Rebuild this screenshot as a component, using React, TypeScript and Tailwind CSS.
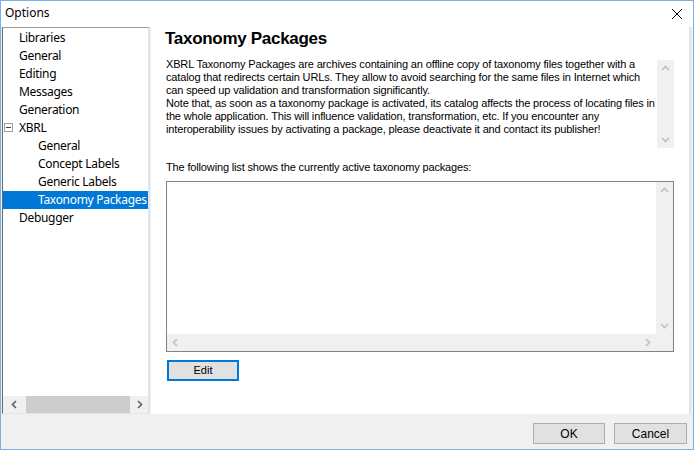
import React from "react";

const ui = { fontFamily: '"Noto Sans", "Open Sans", sans-serif' };
const ms = { fontFamily: '"Liberation Sans", Arial, sans-serif' };

function Chevron({ dir, color }: { dir: "up" | "down" | "left" | "right"; color: string }) {
  const paths: Record<string, string> = {
    up: "M1 6 L4.5 2.5 L8 6",
    down: "M1 3 L4.5 6.5 L8 3",
    left: "M6 1 L2.5 4.5 L6 8",
    right: "M3 1 L6.5 4.5 L3 8",
  };
  return (
    <svg width="9" height="9" viewBox="0 0 9 9">
      <path d={paths[dir]} fill="none" stroke={color} strokeWidth="1.6" />
    </svg>
  );
}

const tree: { label: string; level: number; selected?: boolean; toggle?: boolean }[] = [
  { label: "Libraries", level: 1 },
  { label: "General", level: 1 },
  { label: "Editing", level: 1 },
  { label: "Messages", level: 1 },
  { label: "Generation", level: 1 },
  { label: "XBRL", level: 1, toggle: true },
  { label: "General", level: 2 },
  { label: "Concept Labels", level: 2 },
  { label: "Generic Labels", level: 2 },
  { label: "Taxonomy Packages", level: 2, selected: true },
  { label: "Debugger", level: 1 },
];

export default function App() {
  return (
    <div className="w-[694px] h-[450px] border border-[#79b0e6] flex flex-col bg-[#f0f0f0] overflow-hidden">
      {/* title bar */}
      <div className="h-[26px] bg-white flex items-center justify-between shrink-0">
        <span className="pl-[4px] pb-[2px] text-[12px] text-black" style={ui}>Options</span>
        <svg width="12" height="12" viewBox="0 0 12 12" className="mr-[10px]">
          <path d="M1 1 L11 11 M11 1 L1 11" stroke="#000" strokeWidth="1" />
        </svg>
      </div>
      {/* body */}
      <div className="flex h-[387px] shrink-0">
        {/* tree */}
        <div className="ml-[1px] w-[148px] h-[387px] border-t border-l border-t-[#a0a0a0] border-l-[#696969] border-r-2 border-b border-r-[#e3e3e3] border-b-[#e3e3e3] bg-white flex flex-col">
          <div className="flex-1 flex flex-col pt-[1px]" style={ui}>
            {tree.map((t, i) => (
              <div
                key={i}
                className={
                  "h-[18px] flex items-center relative text-[12px] tracking-[-0.3px] whitespace-nowrap " +
                  (t.selected ? "bg-[#0078d7] text-white" : "text-black")
                }
              >
                {t.toggle && (
                  <div className="absolute left-[1px] top-[4px] w-[9px] h-[9px] border border-[#a0a0a0] bg-white flex items-center justify-center">
                    <div className="w-[5px] h-[1px] bg-[#404040]" />
                  </div>
                )}
                <span className={t.level === 1 ? "pl-[16px]" : "pl-[35px]"}>{t.label}</span>
              </div>
            ))}
          </div>
          <div className="h-[17px] bg-[#f0f0f0] flex items-center">
            <div className="w-[23px] flex justify-center"><Chevron dir="left" color="#606060" /></div>
            <div className="w-[104px] h-[17px] bg-[#cdcdcd]" />
            <div className="flex-1 flex justify-center"><Chevron dir="right" color="#606060" /></div>
          </div>
        </div>
        {/* content */}
        <div className="ml-[1px] flex-1 bg-white border-r-2 border-r-[#e3e3e3] mr-[2px] pl-[14px] pr-[15px] flex flex-col">
          <div className="h-[22px] leading-[22px] mt-[1px] text-[17px] font-bold text-black tracking-[-0.3px]" style={ms}>
            Taxonomy Packages
          </div>
          <div className="mt-[8px] h-[90px] flex">
            <div className="flex-1 pl-[1px] text-[11px] leading-[13px] text-black tracking-[-0.15px]" style={ms}>
              XBRL Taxonomy Packages are archives containing an offline copy of taxonomy files together with a catalog that redirects certain URLs. They allow to avoid searching for the same files in Internet which can speed up validation and transformation significantly.
              <br />
              Note that, as soon as a taxonomy package is activated, its catalog affects the process of locating files in the whole application. This will influence validation, transformation, etc. If you encounter any interoperability issues by activating a package, please deactivate it and contact its publisher!
            </div>
            <div className="w-[17px] mt-[2px] bg-[#f0f0f0] flex flex-col justify-between items-center py-[4px]">
              <Chevron dir="up" color="#c0c0c0" />
              <Chevron dir="down" color="#c0c0c0" />
            </div>
          </div>
          <div className="mt-[13px] pl-[1px] text-[11px] leading-[13px] text-black tracking-[-0.15px]" style={ms}>
            The following list shows the currently active taxonomy packages:
          </div>
          <div className="mt-[7px] ml-[1px] h-[171px] border border-[#828282] flex flex-col">
            <div className="flex-1 flex">
              <div className="flex-1" />
              <div className="w-[17px] bg-[#f0f0f0] flex flex-col justify-between items-center py-[4px]">
                <Chevron dir="up" color="#c0c0c0" />
                <Chevron dir="down" color="#c0c0c0" />
              </div>
            </div>
            <div className="h-[17px] bg-[#f0f0f0] flex items-center justify-between px-[4px]">
              <Chevron dir="left" color="#c0c0c0" />
              <div className="mr-[17px]"><Chevron dir="right" color="#c0c0c0" /></div>
            </div>
          </div>
          <div className="mt-[8px] ml-[2px] w-[72px] h-[21px] border-2 border-[#0078d7] bg-[#e1e1e1] flex items-center justify-center text-[11px] text-black" style={ms}>
            Edit
          </div>
        </div>
      </div>
      {/* footer */}
      <div className="flex-1 flex justify-end items-start pt-[9px] pr-[6px] gap-[9px]">
        <div className="w-[72px] h-[21px] border border-[#adadad] bg-[#e1e1e1] flex items-center justify-center text-[12px] text-black" style={ms}>OK</div>
        <div className="w-[73px] h-[21px] border border-[#adadad] bg-[#e1e1e1] flex items-center justify-center text-[12px] text-black" style={ms}>Cancel</div>
      </div>
    </div>
  );
}
